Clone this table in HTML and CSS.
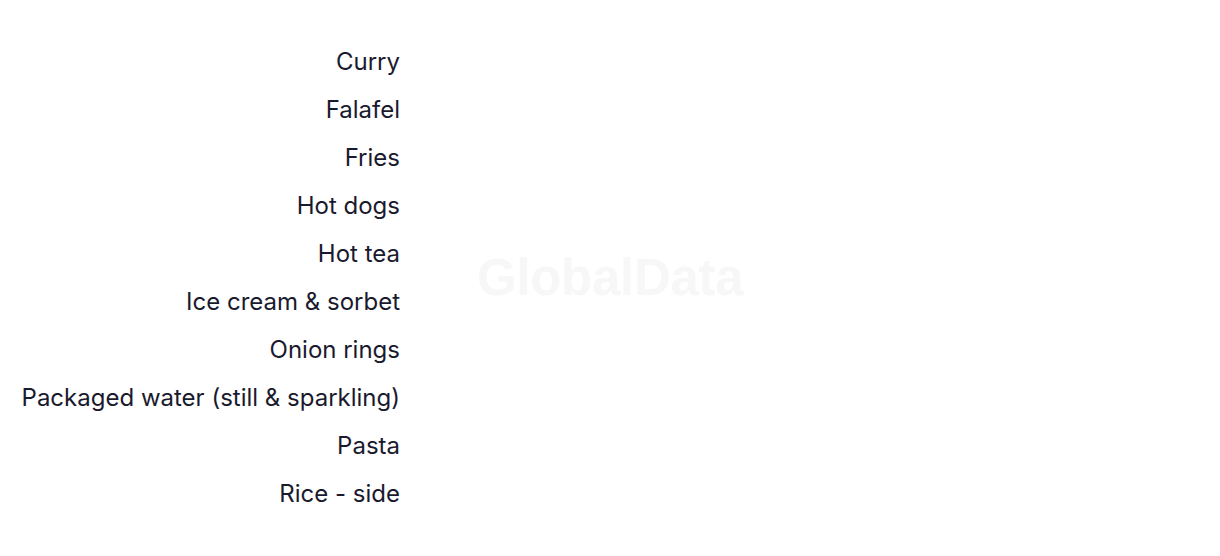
FILE: index.html
```html
<!DOCTYPE html>
<html>
<head>
<meta charset="utf-8">
<link rel="stylesheet" href="styles.css">
</head>
<body>
<div class="chart">
  <ul class="labels">
    <li>Curry</li>
    <li>Falafel</li>
    <li>Fries</li>
    <li>Hot dogs</li>
    <li>Hot tea</li>
    <li>Ice cream &amp; sorbet</li>
    <li>Onion rings</li>
    <li>Packaged water (still &amp; sparkling)</li>
    <li>Pasta</li>
    <li>Rice - side</li>
  </ul>
  <div class="watermark">GlobalData</div>
</div>
</body>
</html>
```
FILE: styles.css
```css
html, body {
  margin: 0;
  padding: 0;
  background: #ffffff;
}
.chart {
  position: relative;
  width: 1220px;
  height: 556px;
}
.labels {
  list-style: none;
  margin: 0;
  padding: 37px 0 0 0;
  width: 400px;
  display: flex;
  flex-direction: column;
}
.labels li {
  height: 48px;
  display: flex;
  align-items: center;
  justify-content: flex-end;
  font-family: Inter, "Liberation Sans", sans-serif;
  font-size: 24px;
  color: #1a1a2e;
  white-space: nowrap;
}
.watermark {
  position: absolute;
  left: 477px;
  top: 250px;
  font-family: "Liberation Sans", Arial, sans-serif;
  font-weight: bold;
  font-size: 51px;
  line-height: 56px;
  color: #f7f7f7;
  letter-spacing: -0.3px;
}
```
